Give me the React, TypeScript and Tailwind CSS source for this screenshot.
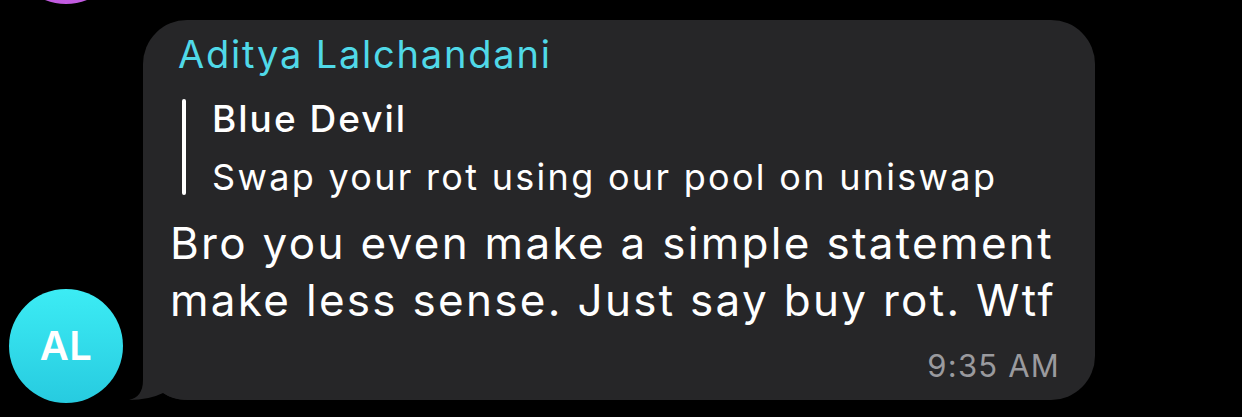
import React from "react";

export default function App() {
  return (
    <div
      className="w-[1242px] h-[417px] overflow-hidden bg-black"
      style={{ fontFamily: "Inter, 'Noto Sans', sans-serif" }}
    >
      {/* previous message avatar, mostly off-screen */}
      <div className="-mt-[110px] ml-[9px] w-[114px] h-[114px] rounded-full bg-linear-to-b from-[#d070ec] to-[#c25be0]" />

      <div className="mt-[16px] flex items-end">
        <div className="ml-[9px] w-[114px] h-[114px] shrink-0 rounded-full bg-linear-to-b from-[#3cecf4] to-[#27cbe0] flex items-center justify-center">
          <span className="text-white font-semibold text-[40px] leading-none tracking-[0.5px]">AL</span>
        </div>

        <div className="relative ml-[20px] mb-[3px] w-[952px] h-[380px] rounded-[44px] bg-[#262628]">
          {/* tail */}
          <svg
            className="absolute left-[-14px] bottom-0"
            width="62"
            height="44"
            viewBox="0 0 62 44"
          >
            <path
              d="M14 0 L14 24 C14 36 9 42 0 44 Q20 44 34 37 Q44 44 58 44 L62 44 L62 0 Z"
              fill="#262628"
            />
          </svg>

          <div className="relative pt-[15px] pl-[27px] pr-[37px]">
            <div className="ml-[8px] text-[38px] leading-[38px] tracking-[1.8px] text-[#50d9e8]">
              Aditya Lalchandani
            </div>

            <div className="mt-[26px] ml-[12px] flex">
              <div className="w-[4px] h-[96px] rounded-full bg-white" />
              <div className="ml-[26px]">
                <div className="text-[37px] leading-[40px] font-medium tracking-[2px] text-white">
                  Blue Devil
                </div>
                <div className="mt-[15px] text-[36px] leading-[46px] tracking-[2.3px] text-white whitespace-nowrap">
                  Swap your rot using our pool on uniswap
                </div>
              </div>
            </div>

            <div className="mt-[15px] text-[44px] leading-[57px] tracking-[2.3px] text-white whitespace-nowrap">
              Bro you even make a simple statement
              <br />
              make less sense. Just say buy rot. Wtf
            </div>

            <div className="mt-[19px] -mr-[2px] text-right text-[31px] leading-[36px] tracking-[1.2px] text-[#9a9a9e]">
              9:35 AM
            </div>
          </div>
        </div>
      </div>
    </div>
  );
}
